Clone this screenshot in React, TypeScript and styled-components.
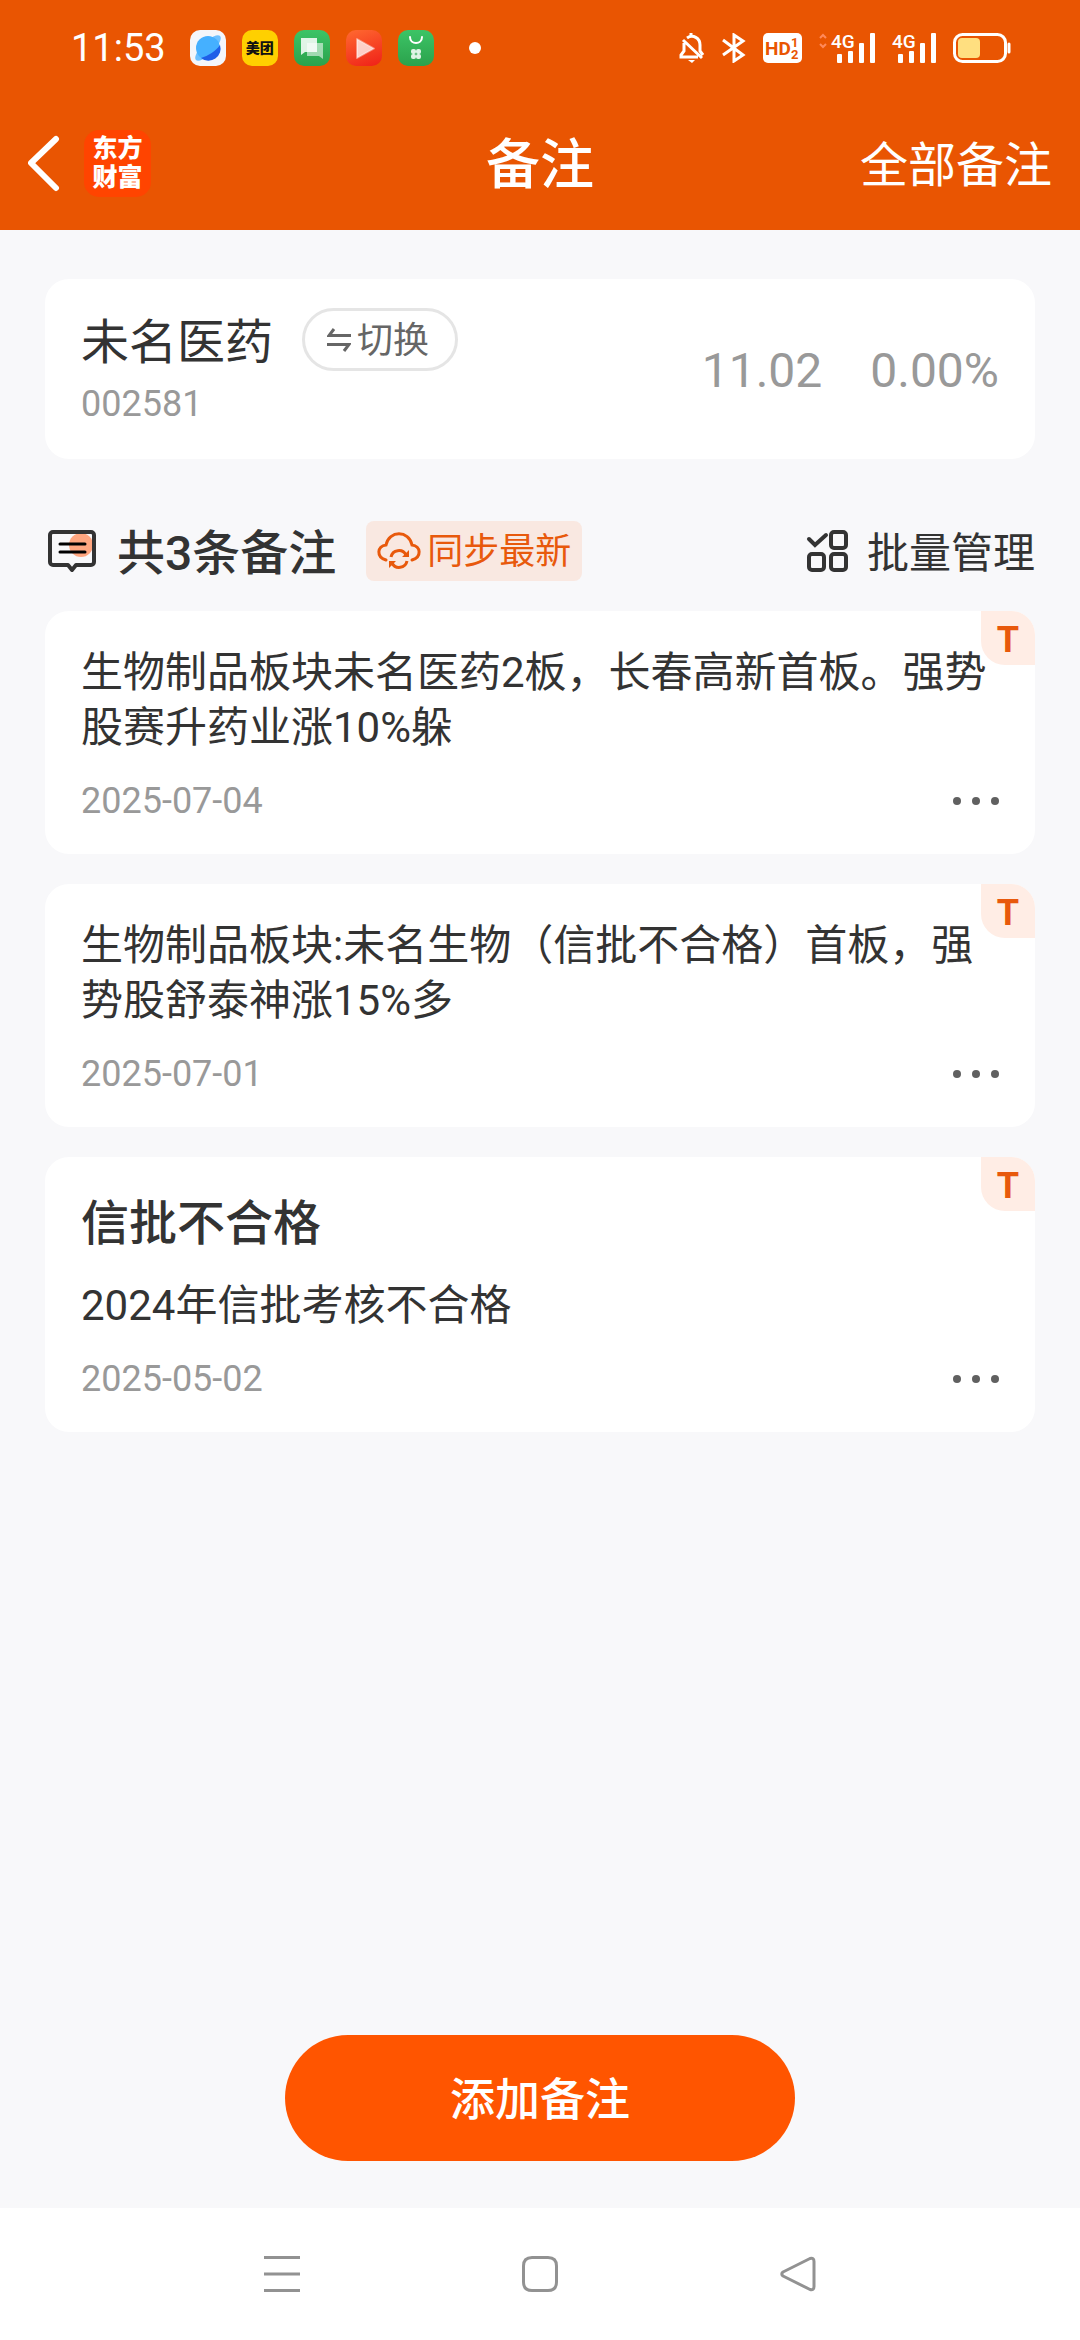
import React from "react";
import styled, { createGlobalStyle, css } from "styled-components";

const C = {
  brand: "#e95502",
  accent: "#ff5500",
  sync: "#e8590c",
  page: "#f8f8fa",
  ink: "#333333",
  mid: "#666666",
  soft: "#999999",
};

const GlobalStyle = createGlobalStyle`
  *, *::before, *::after { box-sizing: border-box; }
  body {
    margin: 0;
    background: ${C.page};
    color: ${C.ink};
    font-family: Roboto, "Noto Sans CJK SC", sans-serif;
  }
  h1, h2, h3, p { margin: 0; }
  button { font: inherit; color: inherit; border: 0; padding: 0; background: none; cursor: pointer; }
  a { color: inherit; text-decoration: none; }
  svg { display: block; flex: none; }
`;

const Screen = styled.div`
  display: flex;
  flex-direction: column;
  min-height: 100vh;
`;

const Header = styled.header`
  background: ${C.brand};
  color: #fff;
`;

const StatusBar = styled.div`
  display: flex;
  align-items: center;
  justify-content: space-between;
  height: 96px;
  padding: 0 69px 0 71px;
`;

const StatusGroup = styled.div<{ $gap: number }>`
  display: flex;
  align-items: center;
  gap: ${(p) => p.$gap}px;
`;

const Clock = styled.time`
  font-size: 38px;
  line-height: 48px;
  margin-right: 8px;
`;

const AppTile = styled.span<{ $bg: string }>`
  display: flex;
  align-items: center;
  justify-content: center;
  width: 36px;
  height: 36px;
  border-radius: 10px;
  background: ${(p) => p.$bg};
  color: #111;
  font-size: 14px;
  line-height: 20px;
  font-weight: 900;
  white-space: nowrap;
`;

const MoreDot = styled.span`
  width: 12px;
  height: 12px;
  margin-left: 19px;
  border-radius: 50%;
  background: #fff;
`;

const TitleBar = styled.div`
  display: grid;
  grid-template-columns: 1fr auto 1fr;
  align-items: center;
  height: 134px;
  padding: 0 28px;
`;

const Leading = styled.div`
  display: flex;
  align-items: center;
  gap: 23px;
`;

const Logo = styled.span`
  display: flex;
  flex-direction: column;
  align-items: center;
  justify-content: center;
  width: 67px;
  height: 67px;
  border-radius: 15px;
  background: #ff4400;
  font-size: 25px;
  line-height: 29px;
  font-weight: 900;
`;

const PageTitle = styled.h1`
  padding-top: 6px;
  font-size: 54px;
  line-height: 72px;
  font-weight: 500;
`;

const AllLink = styled.a`
  justify-self: end;
  padding-top: 6px;
  font-size: 48px;
  line-height: 72px;
`;

const Main = styled.main`
  flex: 1;
  display: flex;
  flex-direction: column;
  padding: 49px 45px 47px;
`;

const card = css`
  background: #fff;
  border-radius: 24px;
`;

const StockCard = styled.section`
  ${card}
  display: flex;
  align-items: center;
  justify-content: space-between;
  min-height: 180px;
  padding: 29px 36px;
`;

const StockInfo = styled.div`
  display: flex;
  flex-direction: column;
  height: 122px;
`;

const StockName = styled.div`
  display: flex;
  align-items: center;
  gap: 29px;

  h2 {
    padding-top: 6px;
    font-size: 48px;
    line-height: 56px;
    font-weight: 400;
  }
`;

const SwitchButton = styled.button`
  display: flex;
  align-items: center;
  gap: 6px;
  height: 63px;
  padding: 0 26px 0 22px;
  border: 3px solid #e5e5e5;
  border-radius: 32px;
  color: ${C.mid};
  font-size: 36px;
  line-height: 48px;
`;

const ChipLabel = styled.span`
  padding-top: 2px;
`;

const Meta = styled.span`
  color: ${C.soft};
  font-size: 36px;
  line-height: 48px;
`;

const StockCode = styled(Meta)`
  margin-top: 9px;
`;

const Quote = styled.div`
  display: flex;
  gap: 48px;
  padding-top: 4px;
  color: ${C.soft};
  font-size: 48px;
  line-height: 56px;
`;

const ListHead = styled.div`
  display: flex;
  align-items: center;
  margin: 62px 0 30px;
  height: 60px;
`;

const Count = styled.h2`
  margin: 0 30px 0 18px;
  padding-top: 6px;
  font-size: 48px;
  line-height: 56px;
  font-weight: 500;
`;

const SyncButton = styled.button`
  display: flex;
  align-items: center;
  gap: 6px;
  height: 60px;
  padding: 0 11px;
  border-radius: 8px;
  background: #f9e8e1;
  color: ${C.sync};
  font-size: 36px;
  line-height: 48px;
`;

const BatchButton = styled.button`
  display: flex;
  align-items: center;
  gap: 18px;
  margin-left: auto;
  font-size: 42px;
  line-height: 56px;
`;

const BatchLabel = styled.span`
  padding-top: 6px;
`;

const Notes = styled.ul`
  display: flex;
  flex-direction: column;
  gap: 30px;
  margin: 0;
  padding: 0;
  list-style: none;
`;

const NoteCard = styled.li`
  ${card}
  position: relative;
  display: flex;
  flex-direction: column;
  gap: 22px;
  padding: 34px 36px 29px;
`;

const Tag = styled.span`
  position: absolute;
  top: 0;
  right: 0;
  width: 54px;
  height: 54px;
  border-radius: 0 24px;
  background: #ffede5;
  color: ${C.sync};
  font-size: 36px;
  line-height: 58px;
  font-weight: 700;
  text-align: center;
`;

const NoteTitle = styled.h3`
  font-size: 48px;
  line-height: 65px;
  font-weight: 500;
`;

const NoteText = styled.p`
  font-size: 42px;
  line-height: 55px;
`;

const NoteFoot = styled.div`
  display: flex;
  align-items: center;
  justify-content: space-between;
  height: 48px;
`;

const AddButton = styled.button`
  align-self: center;
  width: 510px;
  max-width: 100%;
  height: 126px;
  margin-top: auto;
  padding-top: 6px;
  border-radius: 63px;
  background: ${C.accent};
  color: #fff;
  font-size: 45px;
  line-height: 60px;
  font-weight: 500;
`;

const NavBar = styled.nav`
  display: flex;
  align-items: center;
  justify-content: center;
  gap: 222px;
  height: 132px;
  background: #fff;
`;

const BrowserGlyph = () => (
  <svg width="36" height="36" viewBox="0 0 36 36">
    <ellipse cx="18" cy="18" rx="17" ry="6" transform="rotate(-45 18 18)" fill="#6cc0ff" />
    <circle cx="18" cy="18" r="12" fill="#45b0ff" />
    <path d="M30 15a12 12 0 0 1-19 13C18 26 26 21 30 15z" fill="#1f5fe8" />
  </svg>
);

const ChatGlyph = () => (
  <svg width="36" height="36" viewBox="0 0 36 36">
    <path d="M13 13h16v16l-4-3H13z" fill="#fff" fillOpacity=".55" />
    <path d="M7 8h16v14H11l-4 3z" fill="#fff" fillOpacity=".85" />
  </svg>
);

const VideoGlyph = () => (
  <svg width="36" height="36" viewBox="0 0 36 36">
    <path d="M11 9l17 9.500-17 9.500z" fill="#fff" fillOpacity=".75" strokeLinejoin="round" stroke="#fff" strokeOpacity=".4" strokeWidth="2" />
  </svg>
);

const StoreGlyph = () => (
  <svg width="36" height="36" viewBox="0 0 36 36">
    <path d="M12 7c0 8 12 8 12 0" fill="none" stroke="#fff" strokeWidth="2" strokeLinecap="round" />
    <g fill="#fff" fillOpacity=".85">
      <rect x="13" y="19" width="5" height="5" rx="2" />
      <rect x="18" y="19" width="5" height="5" rx="2" />
      <rect x="13" y="24" width="5" height="5" rx="2" />
      <rect x="18" y="24" width="5" height="5" rx="2" />
    </g>
  </svg>
);

const MutedBell = () => (
  <svg width="26" height="30" viewBox="0 0 26 30" fill="none" stroke="#fff" strokeWidth="3">
    <path d="M8 5c6-4 13 0 13 7v6l3 4M5 10v8l-3 4v2h17M4 7l19 18" />
    <path d="M12 0v3" />
    <path d="M9 27h7l-3 3z" fill="#fff" stroke="none" />
  </svg>
);

const Bluetooth = () => (
  <svg width="24" height="30" viewBox="0 0 24 30" fill="none" stroke="#fff" strokeWidth="3">
    <path d="M1 7l20 15-9 6V2l9 6L1 22" />
  </svg>
);

const HdBadge = () => (
  <svg width="39" height="30" viewBox="0 0 39 30">
    <rect width="39" height="30" rx="5" fill="#fff" />
    <g fill={C.brand} fontFamily="Roboto, sans-serif" fontWeight="700">
      <text x="2" y="22" fontSize="19">HD</text>
      <text x="28" y="14" fontSize="13">1</text>
      <text x="28" y="26" fontSize="13">2</text>
    </g>
  </svg>
);

const Signal = ({ arrows }: { arrows?: boolean }) => {
  const x = arrows ? 12 : 0;
  return (
    <svg width={44 + x} height="42" viewBox={`0 -6 ${44 + x} 42`}>
      {arrows && (
        <path d="M1 5l3-3 3 3M1 11l3 3 3-3" fill="none" stroke="#ff8a5c" strokeWidth="2" />
      )}
      <text x={x} y="15" fontSize="19" fontWeight="500" fontFamily="Roboto, sans-serif" fill="#fff">
        4G
      </text>
      <g fill="#fff">
        <rect x={x + 6} y="21" width="5" height="9" rx="1" />
        <rect x={x + 17} y="18" width="5" height="12" rx="1" />
        <rect x={x + 28} y="10" width="5" height="20" rx="1" />
        <rect x={x + 39} y="0" width="5" height="30" rx="1" />
      </g>
    </svg>
  );
};

const Battery = () => (
  <svg width="58" height="30" viewBox="0 0 58 30">
    <rect x="1.500" y="1.500" width="51" height="27" rx="8" fill="none" stroke="#fff" strokeWidth="3" />
    <rect x="5" y="5" width="22" height="20" rx="4" fill="#ffdf80" />
    <path d="M56 11v8" stroke="#fff" strokeWidth="3" strokeLinecap="round" />
  </svg>
);

const BackArrow = () => (
  <svg width="33" height="60" viewBox="4 0 33 60">
    <path d="M32 6L7 30l25 25" fill="none" stroke="#fff" strokeWidth="6" strokeLinecap="round" strokeLinejoin="round" />
  </svg>
);

const SwapIcon = () => (
  <svg width="24" height="24" viewBox="0 0 24 24" fill="none" stroke={C.mid} strokeWidth="3">
    <path d="M24 7.500H2L7 1M0 16.500h22L17 23" />
  </svg>
);

const CommentIcon = () => (
  <svg width="54" height="48" viewBox="0 0 54 48">
    <circle cx="36" cy="18" r="12" fill="#ffa680" />
    <path
      d="M8 5h38a3 3 0 0 1 3 3v27a3 3 0 0 1-3 3H31l-4 5-4-5H8a3 3 0 0 1-3-3V8a3 3 0 0 1 3-3z"
      fill="none"
      stroke={C.ink}
      strokeWidth="4"
      strokeLinejoin="round"
    />
    <path d="M15 17h25M15 25h25" stroke="#000" strokeWidth="3" strokeLinecap="round" />
  </svg>
);

const CloudSync = () => (
  <svg width="44" height="40" viewBox="0 0 44 40" fill="none" stroke={C.sync} strokeWidth="3">
    <path d="M9 29C-1 26 0 15 9 14 12-1 32-1 35 14c9 1 10 12 0 15" strokeLinecap="round" />
    <path d="M14 26a8 8 0 0 1 15-2M30 30a8 8 0 0 1-15 2" />
    <path d="M32 19v7h-7zM12 37v-7h7z" fill={C.sync} stroke="none" />
  </svg>
);

const BatchIcon = () => (
  <svg width="43" height="42" viewBox="0 0 43 42" fill="none" stroke={C.ink} strokeWidth="4">
    <rect x="25" y="2" width="15" height="16" rx="3" />
    <rect x="3" y="24" width="15" height="16" rx="3" />
    <rect x="25" y="24" width="15" height="16" rx="3" />
    <path d="M3 9l6 6L20 5" strokeLinecap="round" />
  </svg>
);

const MoreIcon = () => (
  <svg width="46" height="8" viewBox="0 0 46 8" fill="#606060">
    <circle cx="4" cy="4" r="4" />
    <circle cx="23" cy="4" r="4" />
    <circle cx="42" cy="4" r="4" />
  </svg>
);

const NavIcon = ({ d }: { d: string }) => (
  <svg width="36" height="36" viewBox="0 0 36 36" fill="none" stroke="#929292" strokeWidth="3" strokeLinejoin="round">
    <path d={d} />
  </svg>
);

type Note = { title?: string; text: string; date: string };

const notes: Note[] = [
  { text: "生物制品板块未名医药2板，长春高新首板。强势股赛升药业涨10%躲", date: "2025-07-04" },
  { text: "生物制品板块:未名生物（信批不合格）首板，强势股舒泰神涨15%多", date: "2025-07-01" },
  { title: "信批不合格", text: "2024年信批考核不合格", date: "2025-05-02" },
];

const navItems = [
  { label: "最近任务", d: "M0 1.500h36M0 18h36M0 34.500h36" },
  { label: "主屏幕", d: "M10 1.500h16q8.500 0 8.500 8.500v16q0 8.500-8.500 8.500H10q-8.500 0-8.500-8.500V10q0-8.500 8.500-8.500z" },
  { label: "返回", d: "M30 2.500L3 16q-2.500 2 0 4l27 13.500q4 1 4-3v-25q0-4-4-3z" },
];

export default function App() {
  return (
    <Screen lang="zh-CN">
      <GlobalStyle />
      <Header>
        <StatusBar>
          <StatusGroup $gap={16}>
            <Clock>11:53</Clock>
            <AppTile $bg="#f4f6fa"><BrowserGlyph /></AppTile>
            <AppTile $bg="#ffd000">美团</AppTile>
            <AppTile $bg="linear-gradient(#3cc466, #2ba24c)"><ChatGlyph /></AppTile>
            <AppTile $bg="linear-gradient(160deg, #ff6a30, #ef2018)"><VideoGlyph /></AppTile>
            <AppTile $bg="linear-gradient(#3cc466, #2ba24c)"><StoreGlyph /></AppTile>
            <MoreDot />
          </StatusGroup>
          <StatusGroup $gap={17}>
            <MutedBell />
            <Bluetooth />
            <HdBadge />
            <Signal arrows />
            <Signal />
            <Battery />
          </StatusGroup>
        </StatusBar>
        <TitleBar>
          <Leading>
            <button type="button" aria-label="返回"><BackArrow /></button>
            <Logo>
              <span>东方</span>
              <span>财富</span>
            </Logo>
          </Leading>
          <PageTitle>备注</PageTitle>
          <AllLink href="#all">全部备注</AllLink>
        </TitleBar>
      </Header>

      <Main>
        <StockCard>
          <StockInfo>
            <StockName>
              <h2>未名医药</h2>
              <SwitchButton type="button">
                <SwapIcon />
                <ChipLabel>切换</ChipLabel>
              </SwitchButton>
            </StockName>
            <StockCode>002581</StockCode>
          </StockInfo>
          <Quote>
            <span>11.02</span>
            <span>0.00%</span>
          </Quote>
        </StockCard>

        <ListHead>
          <CommentIcon />
          <Count>共3条备注</Count>
          <SyncButton type="button">
            <CloudSync />
            <ChipLabel>同步最新</ChipLabel>
          </SyncButton>
          <BatchButton type="button">
            <BatchIcon />
            <BatchLabel>批量管理</BatchLabel>
          </BatchButton>
        </ListHead>

        <Notes>
          {notes.map((note) => (
            <NoteCard key={note.date}>
              <Tag>T</Tag>
              {note.title && <NoteTitle>{note.title}</NoteTitle>}
              <NoteText>{note.text}</NoteText>
              <NoteFoot>
                <Meta>{note.date}</Meta>
                <button type="button" aria-label="更多"><MoreIcon /></button>
              </NoteFoot>
            </NoteCard>
          ))}
        </Notes>

        <AddButton type="button">添加备注</AddButton>
      </Main>

      <NavBar>
        {navItems.map((item) => (
          <button key={item.label} type="button" aria-label={item.label}>
            <NavIcon d={item.d} />
          </button>
        ))}
      </NavBar>
    </Screen>
  );
}
